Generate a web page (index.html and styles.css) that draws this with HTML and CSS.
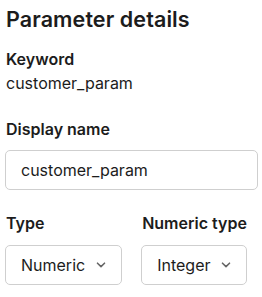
FILE: index.html
```html
<!DOCTYPE html>
<html>
<head>
<meta charset="utf-8">
<link rel="stylesheet" href="styles.css">
</head>
<body>
<div class="panel">
  <h1 class="title">Parameter details</h1>
  <div class="field-static">
    <div class="label">Keyword</div>
    <div class="value">customer_param</div>
  </div>
  <div class="field">
    <div class="label">Display name</div>
    <div class="input">customer_param</div>
  </div>
  <div class="row">
    <div class="field">
      <div class="label">Type</div>
      <div class="select"><span>Numeric</span>
        <svg class="chev" width="10" height="6" viewBox="0 0 10 6"><path d="M1.5 1.2 L5 4.6 L8.5 1.2" fill="none" stroke="#666" stroke-width="1.6" stroke-linecap="round" stroke-linejoin="round"/></svg>
      </div>
    </div>
    <div class="field">
      <div class="label">Numeric type</div>
      <div class="select"><span>Integer</span>
        <svg class="chev" width="10" height="6" viewBox="0 0 10 6"><path d="M1.5 1.2 L5 4.6 L8.5 1.2" fill="none" stroke="#666" stroke-width="1.6" stroke-linecap="round" stroke-linejoin="round"/></svg>
      </div>
    </div>
  </div>
</div>
</body>
</html>
```
FILE: styles.css
```css
html, body {
  margin: 0;
  padding: 0;
  background: #fff;
}
body {
  font-family: Inter, "Noto Sans", sans-serif;
  color: #1c1c1c;
}
.panel {
  padding: 5px 4px 0 5px;
  display: flex;
  flex-direction: column;
}
.title {
  margin: 0;
  font-size: 21.5px;
  line-height: 28px;
  font-weight: 600;
  padding-left: 1px;
  letter-spacing: 0.1px;
}
.field-static {
  margin-top: 16px;
  display: flex;
  flex-direction: column;
  gap: 4px;
  padding-left: 1px;
}
.label {
  font-size: 16px;
  line-height: 20px;
  font-weight: 600;
  padding-left: 1px;
}
.field-static .label { padding-left: 0; }
.value {
  font-size: 16px;
  line-height: 20px;
}
.field {
  display: flex;
  flex-direction: column;
  gap: 11px;
}
.panel > .field { margin-top: 26px; }
.input {
  height: 40px;
  box-sizing: border-box;
  border: 1px solid #cfcfcf;
  border-radius: 5px;
  padding: 0 15px;
  display: flex;
  align-items: center;
  font-size: 16px;
}
.row {
  margin-top: 23px;
  display: flex;
  gap: 19px;
  align-items: flex-start;
}
.row .field { align-items: flex-start; gap: 12px; }
.select {
  height: 40px;
  box-sizing: border-box;
  border: 1px solid #cfcfcf;
  border-radius: 5px;
  padding: 0 15px;
  display: flex;
  align-items: center;
  gap: 11px;
  font-size: 16px;
}
.chev { display: block; }
```
